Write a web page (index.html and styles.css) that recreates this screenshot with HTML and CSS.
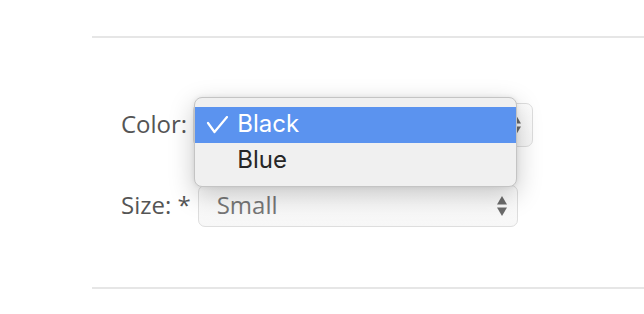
FILE: index.html
```html
<!DOCTYPE html>
<html lang="en">
<head>
  <meta charset="UTF-8">
  <meta name="viewport" content="width=device-width, initial-scale=1.0">
  <title>Product options</title>
  <link rel="stylesheet" href="styles.css">
</head>
<body>
  <div class="options">
    <div class="row">
      <label class="label">Color:</label>
      <div class="select select-color">
        <span class="value"></span>
        <svg class="arrows" width="12" height="24" viewBox="0 0 12 24">
          <polygon points="1,10.5 11,10.5 6,2" />
          <polygon points="1,13.5 11,13.5 6,22" />
        </svg>
        <div class="menu">
          <div class="item active">
            <svg class="check" width="22" height="18" viewBox="0 0 22 18">
              <polyline points="2,7 8.5,16 21,1" />
            </svg>
            Black
          </div>
          <div class="item">Blue</div>
        </div>
      </div>
    </div>

    <div class="row row-size">
      <label class="label">Size: *</label>
      <div class="select select-size">
        <span class="value">Small</span>
        <svg class="arrows" width="12" height="24" viewBox="0 0 12 24">
          <polygon points="1,10.5 11,10.5 6,2" />
          <polygon points="1,13.5 11,13.5 6,22" />
        </svg>
      </div>
    </div>
  </div>
</body>
</html>
```

FILE: styles.css
```css
* {
  margin: 0;
  padding: 0;
  box-sizing: border-box;
}

body {
  background: #fff;
  font-family: 'Open Sans', sans-serif;
  overflow: hidden;
}

.options {
  margin: 36px 0 0 92px;
  border-top: 2px solid #e6e6e6;
  border-bottom: 2px solid #e6e6e6;
  padding: 65px 0 60px 29px;
  display: flex;
  flex-direction: column;
  gap: 38px;
}

.row {
  display: flex;
  align-items: center;
  gap: 6px;
}

.row-size {
  gap: 7px;
}

.label {
  color: #555;
  font-size: 24px;
  margin-bottom: 4px;
}

.select {
  position: relative;
  display: flex;
  align-items: center;
  justify-content: space-between;
  background: linear-gradient(#fdfdfd, #f7f7f7);
  border: 1px solid #dedede;
  border-radius: 7px;
  padding: 0 10px 4px 18px;
  font-size: 24px;
  color: #777;
}

.select .arrows {
  margin-top: 4px;
}

.select-color {
  width: 340px;
  height: 44px;
}

.select-size {
  width: 320px;
  height: 42px;
  padding-right: 9px;
}

.arrows polygon {
  fill: #6b6b6b;
}

.menu {
  position: absolute;
  top: -7px;
  left: 0;
  width: 323px;
  height: 90px;
  padding: 9px 0;
  background: #f0f0f0;
  border: 1px solid #c4c4c4;
  border-radius: 8px;
  box-shadow: 0 8px 26px rgba(0, 0, 0, 0.22), 0 0 5px rgba(0, 0, 0, 0.08);
  font-family: Inter, 'Noto Sans', sans-serif;
  z-index: 10;
}

.item {
  position: relative;
  height: 35px;
  line-height: 33px;
  padding-left: 42px;
  font-size: 24px;
  color: #262626;
}

.item.active {
  height: 36px;
  line-height: 33px;
  background: #5b93ef;
  color: #fff;
}

.check {
  position: absolute;
  left: 11px;
  top: 9px;
}

.check polyline {
  fill: none;
  stroke: #fff;
  stroke-width: 2.2;
  stroke-linecap: round;
  stroke-linejoin: round;
}
```
